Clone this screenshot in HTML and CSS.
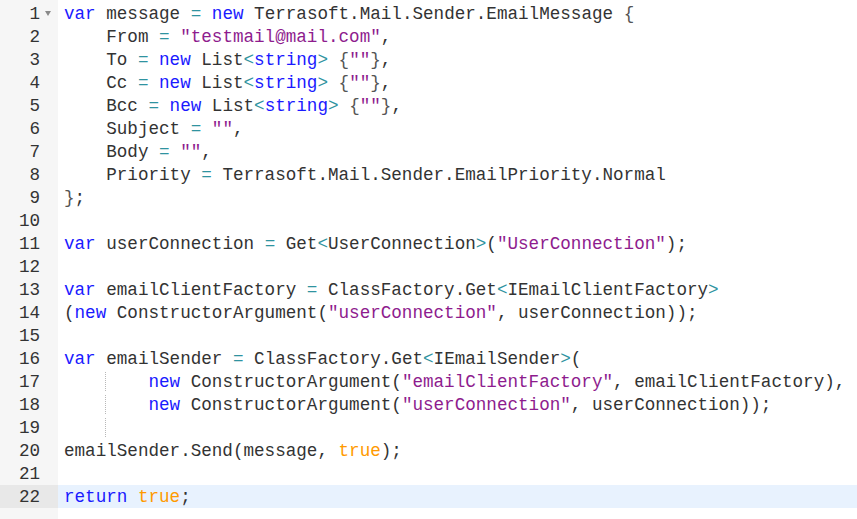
FILE: index.html
```html
<!DOCTYPE html>
<html>
<head>
<meta charset="utf-8">
<link rel="stylesheet" href="styles.css">
</head>
<body>
<div class="editor">
  <div class="gutter">
    <div class="gl"><span class="num">1</span><span class="fold"><span class="tri"></span></span></div>
    <div class="gl"><span class="num">2</span><span class="fold"></span></div>
    <div class="gl"><span class="num">3</span><span class="fold"></span></div>
    <div class="gl"><span class="num">4</span><span class="fold"></span></div>
    <div class="gl"><span class="num">5</span><span class="fold"></span></div>
    <div class="gl"><span class="num">6</span><span class="fold"></span></div>
    <div class="gl"><span class="num">7</span><span class="fold"></span></div>
    <div class="gl"><span class="num">8</span><span class="fold"></span></div>
    <div class="gl"><span class="num">9</span><span class="fold"></span></div>
    <div class="gl"><span class="num">10</span><span class="fold"></span></div>
    <div class="gl"><span class="num">11</span><span class="fold"></span></div>
    <div class="gl"><span class="num">12</span><span class="fold"></span></div>
    <div class="gl"><span class="num">13</span><span class="fold"></span></div>
    <div class="gl"><span class="num">14</span><span class="fold"></span></div>
    <div class="gl"><span class="num">15</span><span class="fold"></span></div>
    <div class="gl"><span class="num">16</span><span class="fold"></span></div>
    <div class="gl"><span class="num">17</span><span class="fold"></span></div>
    <div class="gl"><span class="num">18</span><span class="fold"></span></div>
    <div class="gl"><span class="num">19</span><span class="fold"></span></div>
    <div class="gl"><span class="num">20</span><span class="fold"></span></div>
    <div class="gl"><span class="num">21</span><span class="fold"></span></div>
    <div class="gl active"><span class="num">22</span><span class="fold"></span></div>
  </div>
  <div class="code">
<div class="line"><span class="kw">var</span> message <span class="op">=</span> <span class="kw">new</span> Terrasoft.Mail.Sender.EmailMessage <span class="br">{</span></div>
<div class="line">    From <span class="op">=</span> <span class="str">"testmail@mail.com"</span>,</div>
<div class="line">    To <span class="op">=</span> <span class="kw">new</span> List<span class="op">&lt;</span><span class="kw">string</span><span class="op">&gt;</span> <span class="br">{</span><span class="str">""</span><span class="br">}</span>,</div>
<div class="line">    Cc <span class="op">=</span> <span class="kw">new</span> List<span class="op">&lt;</span><span class="kw">string</span><span class="op">&gt;</span> <span class="br">{</span><span class="str">""</span><span class="br">}</span>,</div>
<div class="line">    Bcc <span class="op">=</span> <span class="kw">new</span> List<span class="op">&lt;</span><span class="kw">string</span><span class="op">&gt;</span> <span class="br">{</span><span class="str">""</span><span class="br">}</span>,</div>
<div class="line">    Subject <span class="op">=</span> <span class="str">""</span>,</div>
<div class="line">    Body <span class="op">=</span> <span class="str">""</span>,</div>
<div class="line">    Priority <span class="op">=</span> Terrasoft.Mail.Sender.EmailPriority.Normal</div>
<div class="line"><span class="br">}</span>;</div>
<div class="line"> </div>
<div class="line"><span class="kw">var</span> userConnection <span class="op">=</span> Get<span class="op">&lt;</span>UserConnection<span class="op">&gt;</span>(<span class="str">"UserConnection"</span>);</div>
<div class="line"> </div>
<div class="line"><span class="kw">var</span> emailClientFactory <span class="op">=</span> ClassFactory.Get<span class="op">&lt;</span>IEmailClientFactory<span class="op">&gt;</span></div>
<div class="line">(<span class="kw">new</span> ConstructorArgument(<span class="str">"userConnection"</span>, userConnection));</div>
<div class="line"> </div>
<div class="line"><span class="kw">var</span> emailSender <span class="op">=</span> ClassFactory.Get<span class="op">&lt;</span>IEmailSender<span class="op">&gt;</span>(</div>
<div class="line"><span class="guide">    </span>    <span class="kw">new</span> ConstructorArgument(<span class="str">"emailClientFactory"</span>, emailClientFactory),</div>
<div class="line"><span class="guide">    </span>    <span class="kw">new</span> ConstructorArgument(<span class="str">"userConnection"</span>, userConnection));</div>
<div class="line"><span class="guide">    </span></div>
<div class="line">emailSender.Send(message, <span class="bool">true</span>);</div>
<div class="line"> </div>
<div class="line active"><span class="kw">return</span> <span class="bool">true</span>;</div>
  </div>
</div>
</body>
</html>
```
FILE: styles.css
```css
html, body {
  margin: 0;
  padding: 0;
  background: #ffffff;
}

.editor {
  display: flex;
  min-height: 519px;
  font-family: "Liberation Mono", "DejaVu Sans Mono", monospace;
  font-size: 17.6px;
  color: #333333;
}

.gutter {
  width: 58px;
  flex: 0 0 58px;
  background: #f6f6f6;
  padding-top: 2px;
  color: #333333;
}

.gl {
  display: flex;
  justify-content: flex-end;
  align-items: flex-start;
  height: 23px;
  box-sizing: border-box;
  padding-top: 2px;
}

.gl.active {
  background: #e8e8e8;
}

.num {
  line-height: 21px;
}

.fold {
  width: 18px;
  height: 21px;
  display: flex;
  align-items: center;
  justify-content: center;
}

.tri {
  width: 0;
  height: 0;
  border-left: 3.5px solid transparent;
  border-right: 3.5px solid transparent;
  border-top: 5px solid #8a8a8a;
  margin-top: -3px;
  margin-left: -2px;
}

.code {
  flex: 1;
  padding-top: 2px;
}

.line {
  height: 23px;
  box-sizing: border-box;
  padding-top: 2px;
  line-height: 21px;
  white-space: pre;
  padding-left: 6px;
}

.line.active {
  background: #e8f2fe;
}

.kw {
  color: #1a1aff;
}

.str {
  color: #8e1c8e;
}

.op {
  color: #2f93a0;
}

.br {
  color: #555555;
}

.bool {
  color: #ff9a00;
}

.guide {
  background: repeating-linear-gradient(to bottom, #b8b8b8 0 1px, transparent 1px 2px) right top / 1px 100% no-repeat;
}
```
